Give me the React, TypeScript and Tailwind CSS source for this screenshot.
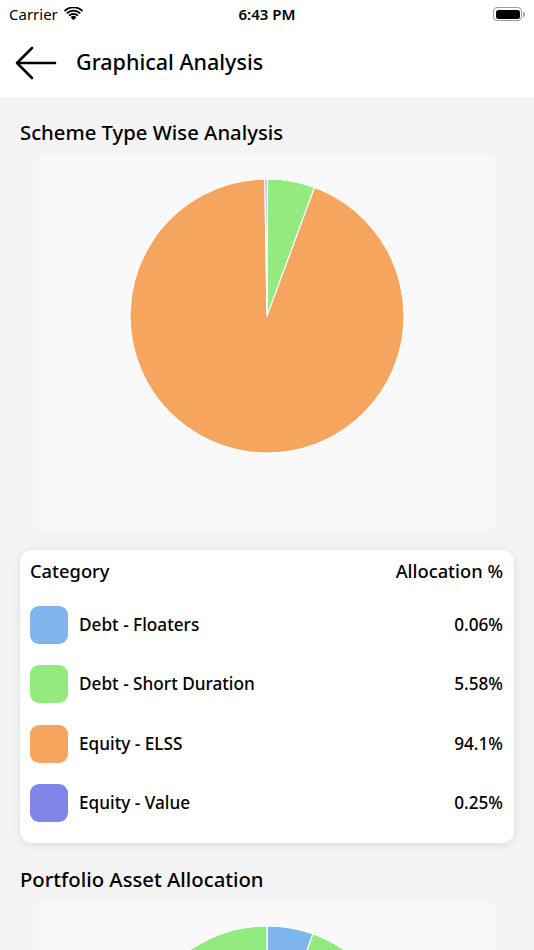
import React from 'react';

type Slice = { label: string; value: number; color: string };

const schemeSlices: Slice[] = [
  { label: 'Debt - Floaters', value: 0.06, color: '#7eb6ec' },
  { label: 'Debt - Short Duration', value: 5.58, color: '#93ea7f' },
  { label: 'Equity - ELSS', value: 94.1, color: '#f6a55f' },
  { label: 'Equity - Value', value: 0.25, color: '#8086e8' },
];

function arcPath(cx: number, cy: number, r: number, start: number, end: number) {
  const a0 = ((start - 90) * Math.PI) / 180;
  const a1 = ((end - 90) * Math.PI) / 180;
  const x0 = cx + r * Math.cos(a0);
  const y0 = cy + r * Math.sin(a0);
  const x1 = cx + r * Math.cos(a1);
  const y1 = cy + r * Math.sin(a1);
  const large = end - start > 180 ? 1 : 0;
  return `M ${cx} ${cy} L ${x0} ${y0} A ${r} ${r} 0 ${large} 1 ${x1} ${y1} Z`;
}

function Pie({ slices }: { slices: Slice[] }) {
  const total = slices.reduce((sum, s) => sum + s.value, 0);
  let angle = 0;
  return (
    <svg width="456" height="373" viewBox="0 0 456 373">
      {slices.map((slice) => {
        const start = angle;
        const end = angle + (slice.value / total) * 360;
        angle = end;
        return (
          <path
            key={slice.label}
            d={arcPath(228, 160, 137, start, end)}
            fill={slice.color}
            stroke="#ffffff"
            strokeWidth={1.2}
            strokeLinejoin="round"
          />
        );
      })}
    </svg>
  );
}

function StatusBar() {
  return (
    <div className="flex h-[28px] items-center justify-between bg-white px-[9px] text-[15px] text-black">
      <div className="flex w-[120px] items-center gap-[6px]">
        <span>Carrier</span>
        <svg width="19" height="14" viewBox="0 0 19 14">
          <path d="M9.5 13.2 L6.6 10.2 A4.2 4.2 0 0 1 12.4 10.2 Z" fill="#000" />
          <path d="M4.4 8 A7.3 7.3 0 0 1 14.6 8 L13.3 9.3 A5.4 5.4 0 0 0 5.7 9.3 Z" fill="#000" />
          <path d="M2.1 5.7 A10.6 10.6 0 0 1 16.9 5.7 L15.6 7 A8.7 8.7 0 0 0 3.4 7 Z" fill="#000" />
          <path d="M-0.2 3.4 A13.9 13.9 0 0 1 19.2 3.4 L17.9 4.7 A12 12 0 0 0 1.1 4.7 Z" fill="#000" />
        </svg>
      </div>
      <span className="font-semibold">6:43 PM</span>
      <div className="flex w-[120px] justify-end">
        <div className="flex items-center">
          <div className="flex h-[14px] w-[29px] items-center rounded-[4px] border border-[#9a9a9a] p-[1.5px]">
            <div className="h-full w-full rounded-[2.5px] bg-black" />
          </div>
          <div className="ml-[1px] h-[5px] w-[1.5px] rounded-r bg-[#9a9a9a]" />
        </div>
      </div>
    </div>
  );
}

function Header() {
  return (
    <div className="flex h-[69px] items-center bg-white pl-[15px]">
      <svg width="42" height="34" viewBox="0 0 42 34" fill="none" stroke="#000" strokeWidth="2.6" strokeLinecap="round" strokeLinejoin="round">
        <path d="M40 17 H3" />
        <path d="M17 2 L2 17 L17 32" />
      </svg>
      <h1 className="ml-[19px] text-[21.5px] font-medium text-black">Graphical Analysis</h1>
    </div>
  );
}

function SectionTitle({ children }: { children: string }) {
  return <h2 className="px-[20px] text-[20.3px] font-medium leading-[26px] text-black">{children}</h2>;
}

function ChartBox({ children }: { children: React.ReactNode }) {
  return <div className="mx-[39px] h-[373px] overflow-hidden bg-[#f9f9f9]">{children}</div>;
}

function LegendCard() {
  return (
    <div className="mx-[20px] rounded-[12px] bg-white pl-[10px] pr-[11px] pb-[10px] shadow-[0_2px_10px_rgba(0,0,0,0.10)]">
      <div className="flex h-[42px] items-center justify-between text-[18.3px] font-medium text-black">
        <span>Category</span>
        <span>Allocation %</span>
      </div>
      <div className="pt-[3px]">
        {schemeSlices.map((slice) => (
          <div key={slice.label} className="flex h-[59.5px] items-center">
            <div className="h-[38px] w-[38px] rounded-[9px]" style={{ backgroundColor: slice.color }} />
            <span className="ml-[11px] flex-1 text-[17.2px] font-medium text-black">{slice.label}</span>
            <span className="text-[17.2px] font-medium text-black">{slice.value}%</span>
          </div>
        ))}
      </div>
    </div>
  );
}

export default function App() {
  return (
    <div className="h-[950px] w-[534px] overflow-hidden bg-[#f4f4f4] font-['Noto_Sans',sans-serif]">
      <StatusBar />
      <Header />
      <div className="pt-[22px]">
        <SectionTitle>Scheme Type Wise Analysis</SectionTitle>
        <div className="mt-[11px]">
          <ChartBox>
            <Pie slices={schemeSlices} />
          </ChartBox>
        </div>
        <div className="mt-[21px]">
          <LegendCard />
        </div>
        <div className="mt-[23px]">
          <SectionTitle>Portfolio Asset Allocation</SectionTitle>
        </div>
        <div className="mt-[11px]">
          <ChartBox>
            <svg width="456" height="373" viewBox="0 0 456 373">
              <path d={arcPath(228, 160, 137, 0, 19.6)} fill="#7eb6ec" stroke="#fff" strokeWidth={1.2} />
              <path d={arcPath(228, 160, 137, 19.6, 90)} fill="#93ea7f" stroke="#fff" strokeWidth={1.2} />
              <path d={arcPath(228, 160, 137, 90, 360)} fill="#93ea7f" stroke="#fff" strokeWidth={1.2} />
            </svg>
          </ChartBox>
        </div>
      </div>
    </div>
  );
}
